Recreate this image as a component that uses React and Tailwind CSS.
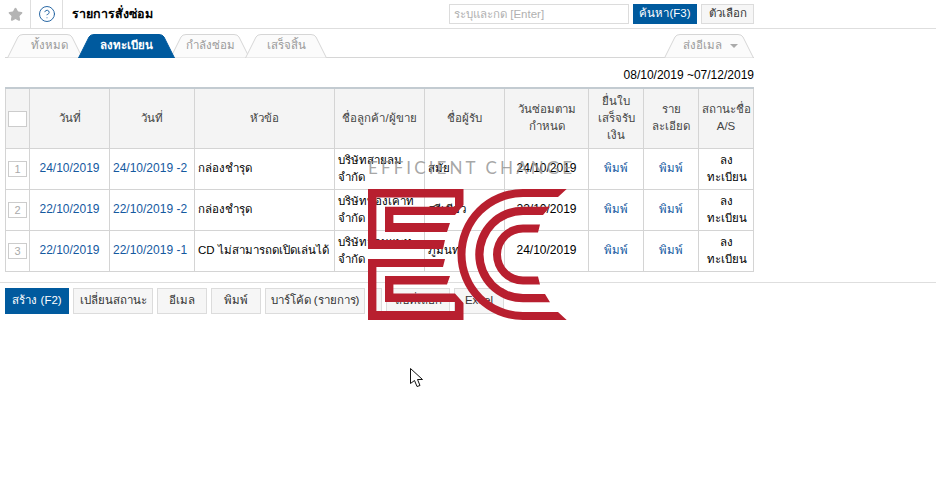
import React from "react";
import { CircleHelp, Star } from "lucide-react";

const rows = [
  { no: 1, date: "24/10/2019", code: "24/10/2019 -2", title: "กล่องชำรุด", customer: "บริษัทสายลม จำกัด", receiver: "สมัย", due: "24/10/2019" },
  { no: 2, date: "22/10/2019", code: "22/10/2019 -2", title: "กล่องชำรุด", customer: "บริษัททองเคาท จำกัด", receiver: "ศรีเชียว", due: "22/10/2019" },
  { no: 3, date: "22/10/2019", code: "22/10/2019 -1", title: "CD ไม่สามารถดเปิดเล่นได้", customer: "บริษัทจอมแพท จำกัด", receiver: "ภูมินท", due: "24/10/2019" },
];

const tabs = [
  { label: "ทั้งหมด", width: 76, pad: "pl-[9px]" },
  { label: "ลงทะเบียน", width: 97, active: true },
  { label: "กำลังซ่อม", width: 80 },
  { label: "เสร็จสิ้น", width: 82 },
];

function Tab({ label, width, active, pad = "", children, className = "" }) {
  const w = width - 0.5;
  return (
    <div
      className={`relative h-[24px] flex items-center justify-center text-[11.5px] ${pad} ${active ? "text-white font-bold z-10" : "text-[#9a9a9a]"} ${className}`}
      style={{ width }}
    >
      <svg className="absolute inset-0" width={width} height="24" viewBox={`0 0 ${width} 24`}>
        <path
          d={`M0.5 24 L11 3 Q12.5 0.5 16 0.5 L${w - 15.5} 0.5 Q${w - 12} 0.5 ${w - 10.5} 3 L${w} 24 Z`}
          fill={active ? "#005a9e" : "#fbfbfb"}
          stroke={active ? "#005a9e" : "#d6d6d6"}
        />
      </svg>
      <span className="relative">{label}</span>
      {children}
    </div>
  );
}

function Btn({ children, className = "" }) {
  return (
    <button className={`h-[26px] border border-[#dcdcdc] bg-[#f6f6f6] text-[11.5px] text-[#333] ${className}`}>
      {children}
    </button>
  );
}

function EcLogo() {
  return (
    <svg className="absolute left-[360px] top-[180px] pointer-events-none" width="215" height="145" viewBox="360 180 215 145">
      <g fill="#b81f2f">
        <path d="M368 189 H463.5 V205 L455 215 H393.4 V223 H450 L447 232 H385 V206.7 H455 V197.4 H376.4 V240 H445 L443 249 H368 Z" />
        <path d="M368 259 H445 L443 267 H376.4 V311 H455 V302 H385 V276 H450 L447 284.5 H393.4 V293.5 H455 L463.5 303 V320 H368 Z" />
        <path d="M566.7 189 H523 A65.5 65.5 0 0 0 523 320 H566.7 L558 312 H523 A57.5 57.5 0 0 1 523 197 H558 Z" />
        <path d="M550 206.7 H523 A47.8 47.8 0 0 0 523 302.3 H550 L545 294 H523 A39.5 39.5 0 0 1 523 215 H543 Z" />
        <path d="M540 224.5 H523 A30 30 0 0 0 523 284.5 H540 L538 276.5 H523 A22 22 0 0 1 523 232.5 H538 Z" />
      </g>
    </svg>
  );
}

export default function App() {
  return (
    <div className="relative w-[936px] h-[480px] overflow-hidden bg-white text-xs text-[#222] font-['Liberation_Sans','Noto_Sans',sans-serif]">
      {/* top bar */}
      <div className="flex items-center h-[29px] border-b border-[#dedede]">
        <div className="w-[31px] h-full flex items-center justify-center border-r border-[#dedede]">
          <Star size={15} className="text-[#b4b4b4]" fill="#b4b4b4" />
        </div>
        <div className="w-[32px] h-full flex items-center justify-center border-r border-[#dedede]">
          <CircleHelp size={18} strokeWidth={1.25} className="text-[#1d5f9f]" />
        </div>
        <div className="ml-[9px] text-[12.5px] font-bold text-black">รายการสั่งซ่อม</div>
        <div className="ml-auto mr-[182px] flex gap-1 items-center">
          <input
            placeholder="ระบุและกด [Enter]"
            className="w-[180px] h-[20px] border border-[#dcdcdc] px-1 text-[11.5px] placeholder:text-[#b0b0b0]"
          />
          <button className="w-[64px] h-[20px] bg-[#005a9e] text-white text-[11.5px]">ค้นหา(F3)</button>
          <button className="w-[53px] h-[20px] border border-[#dcdcdc] bg-[#f6f6f6] text-[11.5px] text-[#333]">ตัวเลือก</button>
        </div>
      </div>

      {/* tabs */}
      <div className="mt-[5px] mx-[5px] w-[749px] flex border-b border-[#d6d6d6] h-[24px] pl-[2px]">
        {tabs.map((t, i) => (
          <Tab key={t.label} {...t} className={i > 0 ? "-ml-[5px]" : ""} />
        ))}
        <Tab label="ส่งอีเมล" width={90} pad="pl-[3px]" className="ml-auto">
          <span className="relative ml-[8px] w-0 h-0 border-x-[4px] border-x-transparent border-t-[4px] border-t-[#aaa]" />
        </Tab>
      </div>

      {/* date range */}
      <div className="w-[754px] text-right mt-[10px] h-[14px] leading-[14px] text-black">08/10/2019 ~07/12/2019</div>

      {/* table */}
      <table className="ml-[5px] mt-[5px] w-[748px] table-fixed border-collapse border-t-2 border-t-[#c3cbd1] leading-[17px]">
        <colgroup>
          <col className="w-[24px]" />
          <col className="w-[80px]" />
          <col className="w-[85px]" />
          <col className="w-[140px]" />
          <col className="w-[90px]" />
          <col className="w-[80px]" />
          <col className="w-[84px]" />
          <col className="w-[55px]" />
          <col className="w-[55px]" />
          <col className="w-[55px]" />
        </colgroup>
        <thead>
          <tr className="h-[60px] bg-[#f4f4f4] text-[#444] text-center text-[11.5px]">
            <th className="border border-[#d4d4d4] font-normal">
              <div className="w-[19px] h-[16px] border border-[#ccc] bg-white mx-auto mt-[2px]" />
            </th>
            {["วันที่", "วันที่", "หัวข้อ", "ชื่อลูกค้า/ผู้ขาย", "ชื่อผู้รับ"].map((h, i) => (
              <th key={i} className="border border-[#d4d4d4] font-normal">{h}</th>
            ))}
            <th className="border border-[#d4d4d4] font-normal">วันซ่อมตาม<br />กำหนด</th>
            <th className="border border-[#d4d4d4] font-normal">ยื่นใบ<br />เสร็จรับ<br />เงิน</th>
            <th className="border border-[#d4d4d4] font-normal">ราย<br />ละเอียด</th>
            <th className="border border-[#d4d4d4] font-normal">สถานะชื่อ<br />A/S</th>
          </tr>
        </thead>
        <tbody>
          {rows.map((r) => (
            <tr key={r.no} className="h-[41px]">
              <td className="border border-[#d4d4d4]">
                <div className="w-[19px] h-[16px] border border-[#ccc] mx-auto text-center text-[11px] leading-[14px] text-[#aaa]">{r.no}</div>
              </td>
              <td className="border border-[#d4d4d4] text-center text-[#14599f]">{r.date}</td>
              <td className="border border-[#d4d4d4] pl-[3px] text-[#14599f]">{r.code}</td>
              <td className="border border-[#d4d4d4] pl-[3px] whitespace-nowrap text-black text-[11.5px]">{r.title}</td>
              <td className="border border-[#d4d4d4] pl-[3px] text-black text-[11.5px]">{r.customer}</td>
              <td className="border border-[#d4d4d4] pl-[3px] text-black text-[11.5px]">{r.receiver}</td>
              <td className="border border-[#d4d4d4] text-center text-black">{r.due}</td>
              <td className="border border-[#d4d4d4] text-center text-[#14599f] text-[11.5px]">พิมพ์</td>
              <td className="border border-[#d4d4d4] text-center text-[#14599f] text-[11.5px]">พิมพ์</td>
              <td className="border border-[#d4d4d4] text-center text-black px-2 text-[11.5px]">ลง ทะเบียน</td>
            </tr>
          ))}
        </tbody>
      </table>

      {/* actions */}
      <div className="mt-[10px] border-t border-[#dedede] pt-[5px] pl-[5px] flex gap-1">
        <button className="w-[64px] h-[26px] bg-[#005a9e] text-white text-[11.5px]">สร้าง (F2)</button>
        <Btn className="w-[80px]">เปลี่ยนสถานะ</Btn>
        <Btn className="w-[50px]">อีเมล</Btn>
        <Btn className="w-[50px]">พิมพ์</Btn>
        <Btn className="w-[100px]">บาร์โค้ด (รายการ)</Btn>
        <Btn className="w-[13px]" />
        <Btn className="w-[64px]">ลบที่เลือก</Btn>
        <Btn className="w-[50px] text-xs">Excel</Btn>
      </div>

      {/* logo overlay */}
      <div className="absolute left-[368px] top-[158px] text-[17px] leading-[20px] font-['Lato',sans-serif] tracking-[3.1px] text-[#8f8f8f]/80 whitespace-nowrap">
        EFFICIENT CHANGE
      </div>
      <EcLogo />

      {/* mouse pointer */}
      <svg className="absolute left-[408px] top-[366px]" width="18" height="24" viewBox="0 0 18 24">
        <path d="M2.5 2.5 V17.5 L6.5 14.5 L9 20.5 L12 19.5 L9.5 13.5 H14.5 Z" fill="#fff" stroke="#111" strokeWidth="1" />
      </svg>
    </div>
  );
}
